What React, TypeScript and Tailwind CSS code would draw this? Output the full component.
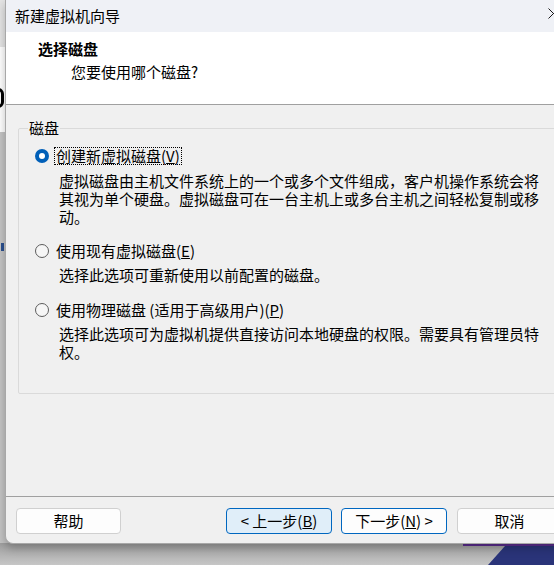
import React from "react";

function Radio({ checked }: { checked?: boolean }) {
  if (checked) {
    return (
      <span className="flex h-[14px] w-[14px] shrink-0 items-center justify-center rounded-full bg-[#005fb8]">
        <span className="h-[6px] w-[6px] rounded-full bg-white" />
      </span>
    );
  }
  return <span className="h-[14px] w-[14px] shrink-0 rounded-full border border-[#5d5d5d] bg-[#f6f6f6]" />;
}

function Line({ children }: { children: React.ReactNode }) {
  return <div className="h-[18px] whitespace-nowrap leading-[18px]">{children}</div>;
}

export default function App() {
  return (
    <div className="relative h-[565px] w-[554px] overflow-hidden bg-[#c4c4c4] font-['Noto_Sans_CJK_SC','Noto_Sans',sans-serif] text-[15px] text-black">
      {/* desktop behind the window */}
      <div className="absolute left-0 top-0 h-[47px] w-[6px] bg-[#e4e4e4]" />
      <div className="absolute left-0 top-[47px] h-[85px] w-[6px] bg-white" />
      <div className="absolute left-[-8px] top-[88px] h-[20px] w-[12px] rounded-full border-[3px] border-black" />
      <div className="absolute left-[1px] top-[243px] h-[8px] w-[3px] bg-[#2a4f8f]" />
      <div className="absolute bottom-0 left-0 h-[22px] w-[554px] bg-gradient-to-b from-[#9e9e9e] to-[#c6c6c6]" />
      <svg className="absolute bottom-0 left-0" width="554" height="22" viewBox="0 0 554 22">
        <polygon points="463,0 554,0 554,3 463,3" fill="#5b2d8f" />
        <polygon points="505,3 554,3 554,22 488,22" fill="#2a3479" />
      </svg>

      {/* window */}
      <div className="absolute left-[5px] top-0 flex h-[544px] w-[600px] flex-col overflow-hidden rounded-bl-[8px] border-b border-l border-[#a8a8a8] bg-[#f0f0f0] shadow-[0_4px_10px_rgba(0,0,0,0.25)]">
        {/* title bar */}
        <div className="relative flex h-[32px] shrink-0 items-center bg-[#eff1f6] pl-[9px] leading-[18px]">
          <span>新建虚拟机向导</span>
          <svg className="absolute left-[542px] top-[8px]" width="11" height="11" viewBox="0 0 11 11">
            <path d="M0.5 0.5 L10.5 10.5 M10.5 0.5 L0.5 10.5" stroke="#1a1a1a" strokeWidth="1" />
          </svg>
        </div>

        {/* header */}
        <div className="flex h-[72px] shrink-0 flex-col bg-white pl-[32px] pt-[8px]">
          <div className="h-[18px] font-bold leading-[18px]">选择磁盘</div>
          <div className="mt-[5px] h-[18px] pl-[33px] leading-[18px]">您要使用哪个磁盘?</div>
        </div>
        <div className="h-px shrink-0 bg-[#a0a0a0]" />

        {/* body */}
        <div className="flex h-[391px] shrink-0 flex-col pl-[12px] pt-[23px]">
          <div className="relative h-[266px] w-[580px] rounded-[2px] border border-[#dadada] pl-[16px] pt-[18px]">
            <div className="absolute left-[9px] top-[-10px] bg-[#f0f0f0] px-[1px] leading-[18px]">磁盘</div>

            <div className="flex h-[18px] items-center">
              <Radio checked />
              <span className="ml-[5px] border border-dotted border-black pl-[1px] pr-[1px] leading-[16px]">
                创建新虚拟磁盘(<span className="underline">V</span>)
              </span>
            </div>
            <div className="mt-[7px] pl-[24px]">
              <Line>虚拟磁盘由主机文件系统上的一个或多个文件组成，客户机操作系统会将</Line>
              <Line>其视为单个硬盘。虚拟磁盘可在一台主机上或多台主机之间轻松复制或移</Line>
              <Line>动。</Line>
            </div>

            <div className="mt-[16px] flex h-[18px] items-center">
              <Radio />
              <span className="ml-[6px] pl-[1px] leading-[18px]">
                使用现有虚拟磁盘(<span className="underline">E</span>)
              </span>
            </div>
            <div className="mt-[6px] pl-[24px]">
              <Line>选择此选项可重新使用以前配置的磁盘。</Line>
            </div>

            <div className="mt-[17px] flex h-[18px] items-center">
              <Radio />
              <span className="ml-[6px] pl-[1px] leading-[18px]">
                使用物理磁盘 (适用于高级用户)(<span className="underline">P</span>)
              </span>
            </div>
            <div className="mt-[6px] pl-[24px]">
              <Line>选择此选项可为虚拟机提供直接访问本地硬盘的权限。需要具有管理员特</Line>
              <Line>权。</Line>
            </div>
          </div>
        </div>
        <div className="h-px shrink-0 bg-[#a0a0a0]" />

        {/* footer */}
        <div className="flex shrink-0 items-start pl-[10px] pt-[11px]">
          <button className="flex h-[26px] w-[105px] items-center justify-center rounded-[4px] border border-[#d0d0d0] bg-[#fdfdfd] leading-[18px]">
            帮助
          </button>
          <button className="ml-[105px] flex h-[26px] w-[106px] items-center justify-center rounded-[4px] border border-[#0067c0] bg-[#e0eef9] leading-[18px]">
            &lt; 上一步(<span className="underline">B</span>)
          </button>
          <button className="ml-[9px] flex h-[26px] w-[106px] items-center justify-center rounded-[4px] border border-[#0067c0] bg-[#fdfdfd] leading-[18px]">
            下一步(<span className="underline">N</span>) &gt;
          </button>
          <button className="ml-[10px] flex h-[26px] w-[105px] items-center justify-center rounded-[4px] border border-[#d0d0d0] bg-[#fdfdfd] leading-[18px]">
            取消
          </button>
        </div>
      </div>
    </div>
  );
}
